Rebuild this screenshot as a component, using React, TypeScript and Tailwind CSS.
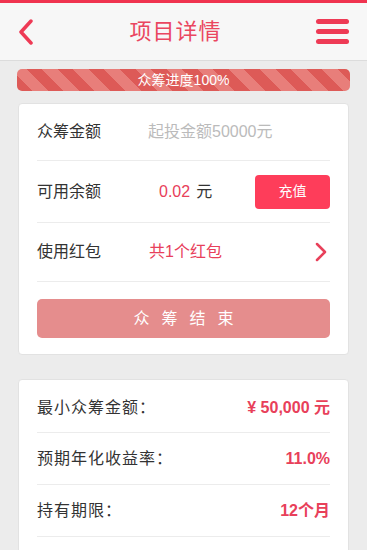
import React from 'react';

const font = { fontFamily: '"Liberation Sans", "Noto Sans CJK SC", sans-serif' };

const stripes =
  'bg-[repeating-linear-gradient(45deg,#dd5a57_0px,#dd5a57_11px,#e87e7a_11px,#e87e7a_22px)]';

export default function App() {
  return (
    <div className="w-[367px] h-[550px] overflow-hidden bg-[#ececec]" style={font}>
      {/* top strip */}
      <div className="h-[3px] bg-[#f0334f]" />

      {/* Header */}
      <div className="h-[58px] bg-[#f7f7f7] border-b border-[#dcdcdc] flex items-center justify-between px-[16px]">
        <svg width="18" height="26" viewBox="0 0 18 26" className="ml-[1px]">
          <path d="M14 2 L4 13 L14 24" fill="none" stroke="#ee3a55" strokeWidth="3.5" strokeLinecap="round" strokeLinejoin="round" />
        </svg>
        <div className="text-[22px] text-[#ea4660] tracking-[1px]">项目详情</div>
        <div className="w-[33px] flex flex-col gap-[5px] mr-[2px]">
          <div className="h-[5px] rounded-full bg-[#ee3a55]" />
          <div className="h-[5px] rounded-full bg-[#ee3a55]" />
          <div className="h-[5px] rounded-full bg-[#ee3a55]" />
        </div>
      </div>

      {/* Progress */}
      <div className="px-[17px] pt-[8px]">
        <div className={`h-[22px] rounded-[5px] flex items-center justify-center text-white text-[14px] ${stripes}`}>
          众筹进度100%
        </div>
      </div>

      {/* Card 1 */}
      <div className="mx-[18px] mt-[12px] bg-white rounded-[4px] border border-[#e2e2e2] px-[18px] pb-[16px]">
        <div className="h-[57px] flex items-center border-b border-[#ececec] text-[16px]">
          <span className="text-[#333] w-[111px]">众筹金额</span>
          <span className="text-[#bbbbbb]">起投金额50000元</span>
        </div>
        <div className="h-[62px] flex items-center border-b border-[#ececec] text-[16px]">
          <span className="text-[#333] w-[122px]">可用余额</span>
          <span className="text-[#e8405a]">0.02</span>
          <span className="text-[#333] ml-[6px]">元</span>
          <button className="ml-auto w-[75px] h-[34px] rounded-[4px] bg-[#fe3d5a] text-white text-[14px]">充值</button>
        </div>
        <div className="h-[59px] flex items-center border-b border-[#ececec] text-[16px]">
          <span className="text-[#333] w-[112px]">使用红包</span>
          <span className="text-[#e8405a]">共1个红包</span>
          <svg width="14" height="20" viewBox="0 0 14 20" className="ml-auto mr-[2px]">
            <path d="M3 2 L11 10 L3 18" fill="none" stroke="#e8405a" strokeWidth="2.5" strokeLinecap="round" strokeLinejoin="round" />
          </svg>
        </div>
        <button className="mt-[17px] w-full h-[39px] rounded-[5px] bg-[#e58d8d] text-white text-[16px] tracking-[12px] pl-[12px]">
          众筹结束
        </button>
      </div>

      {/* Card 2 */}
      <div className="mx-[18px] mt-[24px] bg-white rounded-[4px] border border-[#e2e2e2] px-[18px]">
        {[
          ['最小众筹金额：', '¥ 50,000 元'],
          ['预期年化收益率：', '11.0%'],
          ['持有期限：', '12个月'],
        ].map(([k, v], i) => (
          <div
            key={k}
            className={`flex items-center justify-between border-b border-[#ececec] ${i === 0 ? 'h-[53px] pt-[4px]' : 'h-[52px]'}`}
          >
            <span className="text-[16px] text-[#333] tracking-[1px]">{k}</span>
            <span className="text-[16px] font-bold text-[#e8405a]">{v}</span>
          </div>
        ))}
        <div className="h-[30px]" />
      </div>
    </div>
  );
}
